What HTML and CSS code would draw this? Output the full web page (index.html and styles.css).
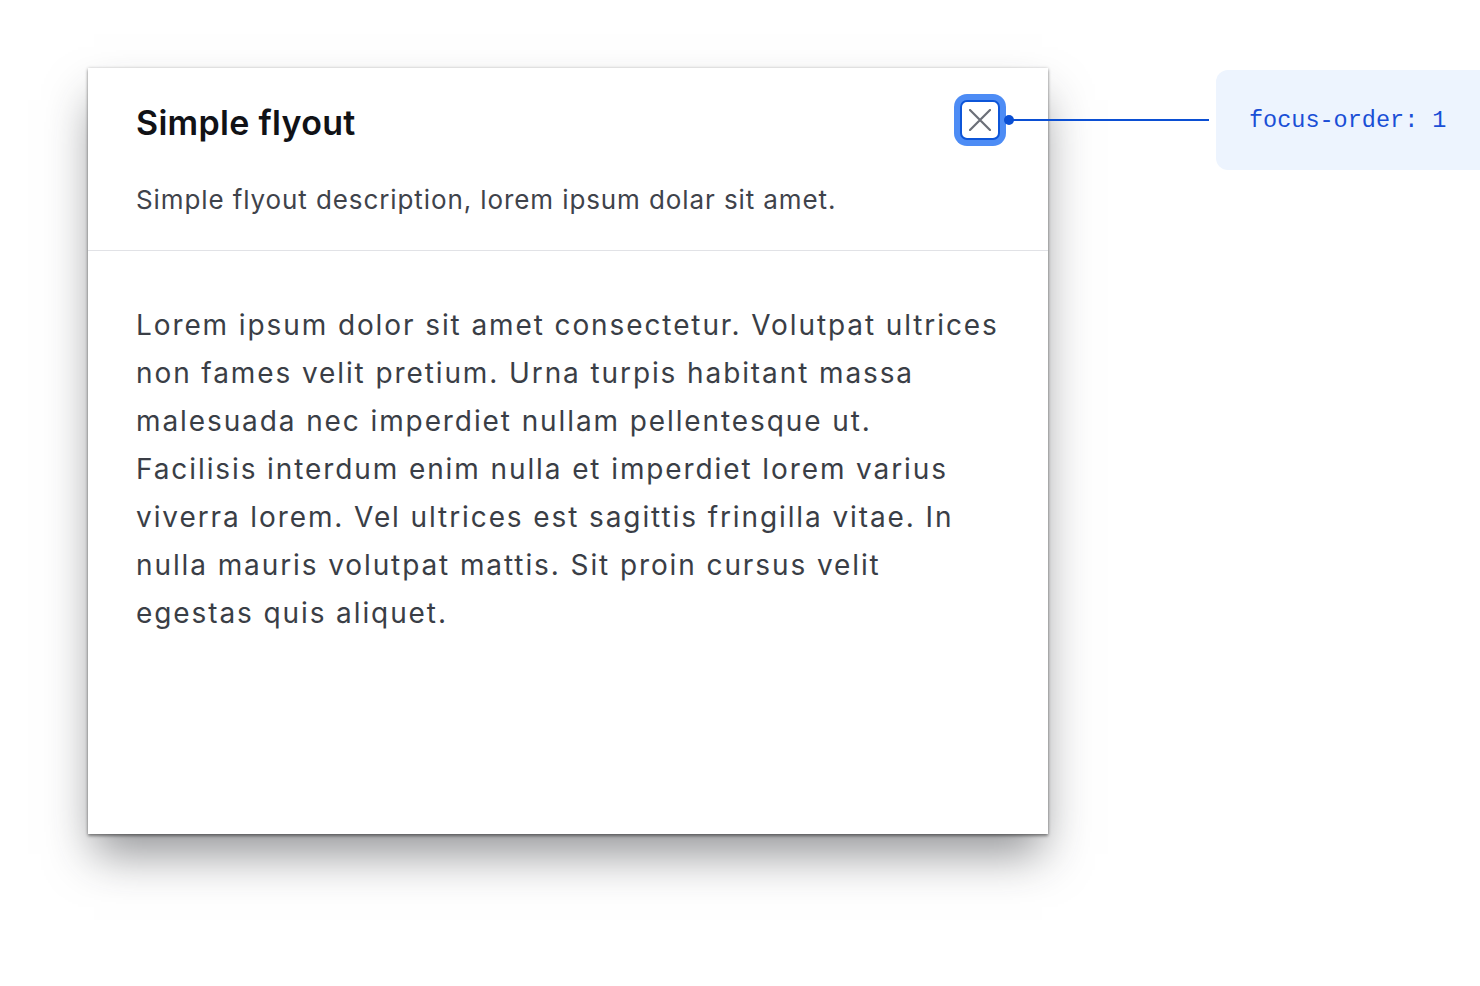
FILE: index.html
```html
<!DOCTYPE html>
<html lang="en">
<head>
  <meta charset="UTF-8">
  <meta name="viewport" content="width=device-width, initial-scale=1.0">
  <title>Simple flyout - focus order</title>
  <link rel="stylesheet" href="styles.css">
</head>
<body>
  <div class="canvas">
    <div class="flyout">
      <div class="flyout-header">
        <div class="title-row">
          <h2>Simple flyout</h2>
          <button class="close-btn" aria-label="Close">
            <svg width="22" height="22" viewBox="0 0 22 22">
              <path d="M1 1L21 21M21 1L1 21" stroke="#6b6f78" stroke-width="2.2" stroke-linecap="round" fill="none"/>
            </svg>
            <span class="connector"></span>
          </button>
        </div>
        <p class="description">Simple flyout description, lorem ipsum dolar sit amet.</p>
      </div>
      <div class="flyout-body">
        <p>Lorem ipsum dolor sit amet consectetur. Volutpat ultrices non fames velit pretium. Urna turpis habitant massa malesuada nec imperdiet nullam pellentesque ut. Facilisis interdum enim nulla et imperdiet lorem varius viverra lorem. Vel ultrices est sagittis fringilla vitae. In nulla mauris volutpat mattis. Sit proin cursus velit egestas quis aliquet.</p>
      </div>
    </div>
    <div class="note">
      <code>focus-order: 1</code>
    </div>
  </div>
</body>
</html>
```

FILE: styles.css
```css
body {
  margin: 0;
  background-color: #ffffff;
  font-family: Inter, "Noto Sans", sans-serif;
  overflow: hidden;
}

.canvas {
  display: flex;
  align-items: flex-start;
  padding: 68px 0 0 88px;
  height: 918px;
}

.flyout {
  flex: none;
  width: 960px;
  height: 766px;
  background-color: #ffffff;
  box-shadow: 0 0 3px rgba(0, 0, 0, 0.18), 0 2px 3px rgba(0, 0, 0, 0.4), 0 26px 44px -6px rgba(40, 42, 48, 0.5);
}

.flyout-header {
  padding: 32px 48px 36px;
  border-bottom: 1px solid #e1e2e6;
}

.title-row {
  display: flex;
  align-items: center;
  justify-content: space-between;
  height: 40px;
}

.title-row h2 {
  margin: 4px 0 0;
  font-size: 34px;
  font-weight: 600;
  color: #111216;
  letter-spacing: 0.3px;
}

.close-btn {
  position: relative;
  display: flex;
  align-items: center;
  justify-content: center;
  width: 40px;
  height: 40px;
  padding: 0;
  background-color: #ffffff;
  border: 2px solid #0d55d8;
  border-radius: 7px;
  box-shadow: 0 0 0 6px #4d8cf5;
  cursor: pointer;
}

.connector {
  position: absolute;
  left: 44px;
  top: 50%;
  width: 203px;
  height: 2px;
  margin-top: -1px;
  background-color: #0b4fd3;
}

.connector::before {
  content: "";
  position: absolute;
  left: -2px;
  top: -4px;
  width: 10px;
  height: 10px;
  border-radius: 50%;
  background-color: #0b4fd3;
}

.description {
  margin: 46px 0 0;
  font-size: 26px;
  line-height: 28px;
  letter-spacing: 0.9px;
  color: #3f434b;
}

.flyout-body {
  padding: 50px 48px 0;
}

.flyout-body p {
  margin: 0;
  font-size: 28px;
  line-height: 48px;
  letter-spacing: 1.9px;
  color: #3a3e46;
}

.note {
  flex: none;
  width: 280px;
  height: 100px;
  margin: 2px 0 0 168px;
  display: flex;
  align-items: center;
  padding-left: 33px;
  box-sizing: border-box;
  background-color: #edf4fe;
  border-radius: 12px;
}

.note code {
  font-family: "Liberation Mono", "Courier New", monospace;
  font-size: 23.5px;
  color: #1a4fd6;
}
```
